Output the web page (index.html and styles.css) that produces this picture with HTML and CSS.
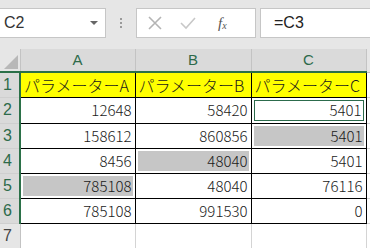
FILE: index.html
```html
<!DOCTYPE html>
<html lang="ja">
<head>
    <meta charset="UTF-8">
    <title>Book1</title>
    <link rel="stylesheet" href="styles.css">
</head>
<body>

    <div class="formula-bar">
        <div class="name-box">
            <span>C2</span>
            <span class="drop"></span>
        </div>
        <div class="grip">
            <i></i><i></i><i></i>
        </div>
        <div class="fx-buttons">
            <svg width="16" height="16" viewBox="0 0 16 16"><path d="M2 2 L14 14 M14 2 L2 14" stroke="#b4b4b4" stroke-width="1.6" fill="none"/></svg>
            <svg width="16" height="16" viewBox="0 0 16 16"><path d="M1 8 L6 13 L15 3" stroke="#c8c8c8" stroke-width="1.6" fill="none"/></svg>
            <span class="fx">f<sub>x</sub></span>
        </div>
        <div class="formula-input">=C3</div>
    </div>

    <table class="sheet">
        <colgroup>
            <col class="c-head"><col class="c-a"><col class="c-b"><col class="c-c"><col>
        </colgroup>
        <tr class="col-heads">
            <th class="corner"><span class="tri"></span></th>
            <th class="sel">A</th>
            <th class="sel">B</th>
            <th class="sel">C</th>
            <th></th>
        </tr>
        <tr>
            <th class="row-head sel">1</th>
            <td class="cell title">パラメーターA</td>
            <td class="cell title">パラメーターB</td>
            <td class="cell title">パラメーターC</td>
            <td class="grid"></td>
        </tr>
        <tr>
            <th class="row-head sel">2</th>
            <td class="cell">12648</td>
            <td class="cell">58420</td>
            <td class="cell active"><span>5401</span></td>
            <td class="grid"></td>
        </tr>
        <tr>
            <th class="row-head sel">3</th>
            <td class="cell">158612</td>
            <td class="cell">860856</td>
            <td class="cell shade"><span>5401</span></td>
            <td class="grid"></td>
        </tr>
        <tr>
            <th class="row-head sel">4</th>
            <td class="cell">8456</td>
            <td class="cell shade"><span>48040</span></td>
            <td class="cell">5401</td>
            <td class="grid"></td>
        </tr>
        <tr>
            <th class="row-head sel">5</th>
            <td class="cell shade"><span>785108</span></td>
            <td class="cell">48040</td>
            <td class="cell">76116</td>
            <td class="grid"></td>
        </tr>
        <tr>
            <th class="row-head sel">6</th>
            <td class="cell">785108</td>
            <td class="cell">991530</td>
            <td class="cell">0</td>
            <td class="grid"></td>
        </tr>
        <tr>
            <th class="row-head">7</th>
            <td class="grid"></td>
            <td class="grid"></td>
            <td class="grid"></td>
            <td class="grid"></td>
        </tr>
    </table>

</body>
</html>
```

FILE: styles.css
```css
body { margin: 0; background: #ffffff; font-family: "Noto Sans CJK JP", "Liberation Sans", sans-serif; overflow: hidden; }

/* formula bar */
.formula-bar { display: flex; align-items: stretch; height: 30px; padding: 8px 0 11px 0; background: #e6e6e6; }
.name-box { width: 96px; display: flex; align-items: center; justify-content: space-between; padding: 0 5px 0 4px; background: #fff; border: 1px solid #c6c6c6; border-left: none; font-family: "Liberation Sans", sans-serif; font-size: 16px; color: #333; }
.drop { width: 0; height: 0; border-left: 4px solid transparent; border-right: 4px solid transparent; border-top: 4px solid #666; margin-right: 2px; }
.grip { width: 30px; display: flex; flex-direction: column; align-items: center; justify-content: center; gap: 2px; }
.grip i { width: 2px; height: 2px; background: #9a9a9a; }
.fx-buttons { width: 108px; display: flex; align-items: center; gap: 0; padding-left: 10px; background: #fff; border: 1px solid #c6c6c6; }
.fx-buttons svg { margin-right: 17px; }
.fx-buttons svg + svg { margin-right: 22px; }
.fx { font-family: "Liberation Serif", serif; font-style: italic; font-size: 15px; color: #555; }
.fx sub { font-size: 10px; vertical-align: -1px; }
.formula-input { flex: 1; display: flex; align-items: center; margin-left: 4px; padding-left: 13px; background: #fff; border: 1px solid #c6c6c6; border-right: none; font-family: "Liberation Sans", sans-serif; font-size: 16px; color: #222; }

/* sheet grid */
.sheet { border-collapse: collapse; table-layout: fixed; width: 400px; }
.sheet th, .sheet td { box-sizing: border-box; padding: 0; line-height: 18px; overflow: hidden; }
.sheet tr { height: 25px; }
.sheet tr.col-heads { height: 23px; }
.c-head { width: 20px; }
.c-a { width: 115px; }
.c-b { width: 116px; }
.c-c { width: 115px; }
.col-heads th { height: 23px; background: #e1e1e1; border-right: 1px solid #c3c3c3; border-bottom: 2px solid #2b7048; font-weight: normal; font-size: 15px; font-family: "Liberation Sans", sans-serif; color: #3c3c3c; }
.col-heads th.sel { color: #2d6a4a; background: #dadada; }
.col-heads th:last-child { border-bottom: 1px solid #c3c3c3; background: #e6e6e6; }
.corner { position: relative; background: #e6e6e6 !important; }
.tri { position: absolute; right: 2px; bottom: 2px; width: 0; height: 0; border-left: 14px solid transparent; border-bottom: 14px solid #b8b8b8; }
.row-head { height: 25px; padding-left: 3px !important; text-align: left; background: #e6e6e6; border-bottom: 1px solid #cfcfcf; border-right: 1px solid #c3c3c3; font-weight: normal; font-family: "Liberation Sans", sans-serif; font-size: 16px; color: #444; }
.row-head.sel { background: #dadada; color: #2d6a4a; border-right: 2px solid #2b7048; }
.cell { height: 25px; padding-right: 3px !important; border: 1px solid #000; text-align: right; font-size: 15px; font-weight: 300; color: #1a1a1a; white-space: nowrap; }
.title { text-align: left; padding-left: 3px !important; background: #ffff00; font-size: 16px; }
.grid { height: 25px; border: 1px solid #d4d4d4; }
.shade, .active { padding: 2px !important; }
.shade span, .active span { display: flex; align-items: center; justify-content: flex-end; height: 20px; padding-right: 1px; }
.shade span { background: #c6c6c6; }
.active span { border: 1px solid #2c6b4c; height: 19px; }
```
